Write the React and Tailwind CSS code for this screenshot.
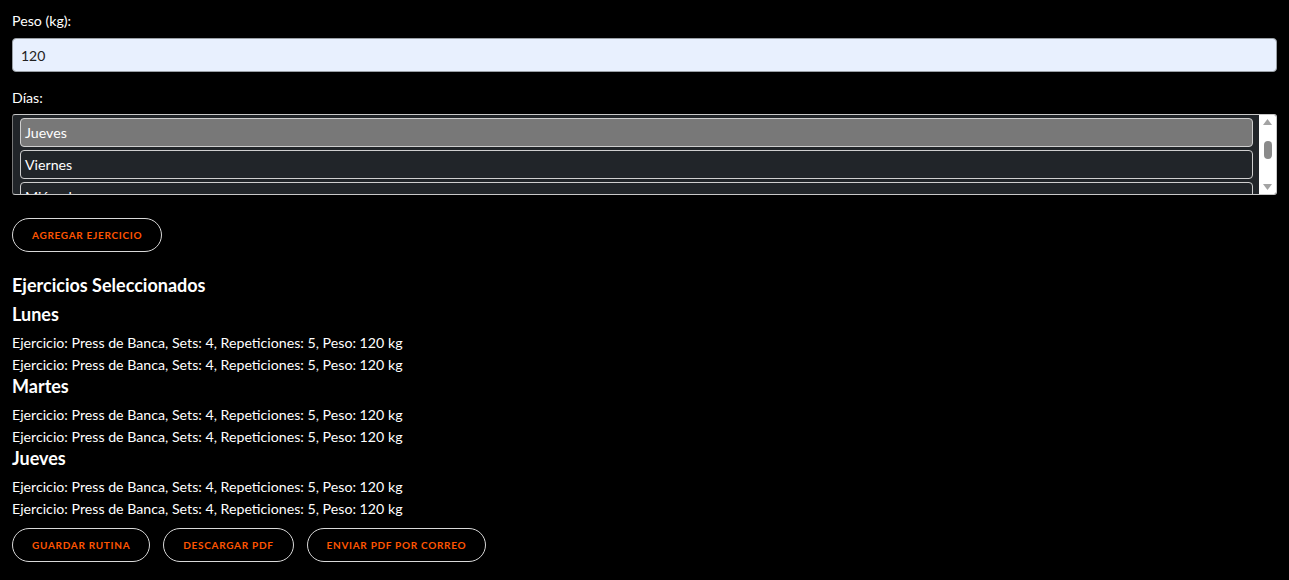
import { useState } from 'react';

const font = { fontFamily: 'Lato, "Noto Sans", sans-serif' };

const dias = ['Jueves', 'Viernes', 'Miércoles'];

const rutina = [
  { dia: 'Lunes', ejercicios: [1, 2] },
  { dia: 'Martes', ejercicios: [1, 2] },
  { dia: 'Jueves', ejercicios: [1, 2] },
];

const PillButton = ({ children }) => (
  <button className="h-[34px] px-[19px] rounded-full border border-[#d9d9d9] bg-black text-[#ff5500] text-[10px] font-bold tracking-[0.07em] uppercase">
    {children}
  </button>
);

const App = () => {
  const [peso, setPeso] = useState('120');
  const [selected, setSelected] = useState('Jueves');

  return (
    <div className="min-h-[580px] bg-black text-white px-3 pt-[12px] text-[14.2px]" style={font}>
      <label className="block leading-[18px] mb-[8px]">Peso (kg):</label>
      <input
        value={peso}
        onChange={(e) => setPeso(e.target.value)}
        className="w-full h-[34px] rounded-[4px] border border-[#9aa0a6] bg-[#e8f0fe] text-[#222] px-[8px] text-[14px] outline-none"
        style={font}
      />

      <label className="block leading-[18px] mt-[17px] mb-[7px]">Días:</label>
      <div className="flex h-[81px] rounded-[3px] border border-[#c8c8c8] border-l-[#777] bg-[#212529] overflow-hidden">
        <div className="flex-1 flex flex-col gap-[3px] pl-[7px] pr-[6px] pt-[3px]">
          {dias.map((d) => (
            <div
              key={d}
              onClick={() => setSelected(d)}
              className={
                'shrink-0 h-[29px] flex items-center px-[4px] rounded-[4px] border border-[#cfcfcf] ' +
                (selected === d ? 'bg-[#787878]' : 'bg-[#212529]')
              }
            >
              {d}
            </div>
          ))}
        </div>
        <div className="w-[17px] bg-white flex flex-col items-center justify-between py-[4px]">
          <svg width="9" height="6" viewBox="0 0 9 6"><path d="M4.5 0L9 6H0z" fill="#a3a3a3" /></svg>
          <div className="w-[8px] h-[18px] rounded-full bg-[#8a8a8a] -mt-[10px]" />
          <svg width="9" height="6" viewBox="0 0 9 6"><path d="M0 0h9L4.5 6z" fill="#a3a3a3" /></svg>
        </div>
      </div>

      <div className="mt-[23px]">
        <PillButton>Agregar Ejercicio</PillButton>
      </div>

      <h2 className="mt-[22px] mb-[8px] text-[18px] font-bold leading-[22px]">Ejercicios Seleccionados</h2>
      {rutina.map((r) => (
        <div key={r.dia}>
          <h3 className="mb-[7px] text-[18px] font-bold leading-[21px]">{r.dia}</h3>
          {r.ejercicios.map((e) => (
            <p key={e} className="leading-[22px]">
              Ejercicio: Press de Banca, Sets: 4, Repeticiones: 5, Peso: 120 kg
            </p>
          ))}
        </div>
      ))}

      <div className="flex gap-[13px] mt-[8px] pb-[18px]">
        <PillButton>Guardar Rutina</PillButton>
        <PillButton>Descargar PDF</PillButton>
        <PillButton>Enviar PDF por correo</PillButton>
      </div>
    </div>
  );
};

export default App;
